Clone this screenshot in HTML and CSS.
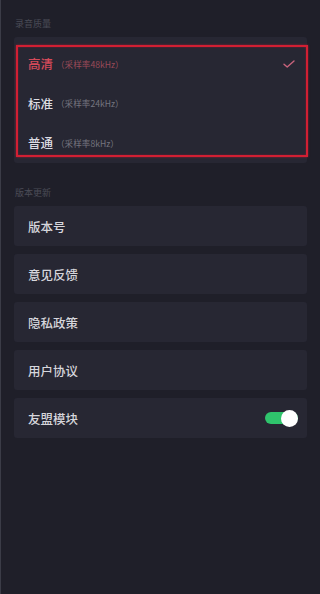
FILE: index.html
```html
<!DOCTYPE html>
<html lang="zh-CN">
<head>
<meta charset="utf-8">
<title>设置</title>
<link rel="stylesheet" href="styles.css">
</head>
<body>
<div class="page">
  <div class="label first">录音质量</div>
  <div class="card quality">
    <div class="qrow selected">
      <span class="qname">高清</span><span class="qsub">（采样率48kHz）</span>
      <svg class="check" width="12" height="8" viewBox="0 0 12 8"><path d="M1 4.2 L4.2 7 L11 1" fill="none" stroke="#c9637c" stroke-width="1.4" stroke-linecap="round" stroke-linejoin="round"/></svg>
    </div>
    <div class="qrow">
      <span class="qname">标准</span><span class="qsub">（采样率24kHz）</span>
    </div>
    <div class="qrow">
      <span class="qname">普通</span><span class="qsub">（采样率8kHz）</span>
    </div>
    <div class="highlight"></div>
  </div>

  <div class="label second">版本更新</div>
  <div class="list">
    <div class="card item">版本号</div>
    <div class="card item">意见反馈</div>
    <div class="card item">隐私政策</div>
    <div class="card item">用户协议</div>
    <div class="card item">友盟模块<span class="toggle"><span class="knob"></span></span></div>
  </div>
</div>
</body>
</html>
```
FILE: styles.css
```css
html, body {
  margin: 0;
  padding: 0;
  background: #1f1f29;
  font-family: "Noto Sans CJK SC", "Noto Sans", sans-serif;
}
.page {
  width: 320px;
  height: 594px;
  box-sizing: border-box;
  border-left: 1px solid #3b3c47;
  padding: 0 13px 0 13px;
  background: #1f1f29;
}
.label {
  font-size: 9px;
  line-height: 12px;
  color: #4b4c57;
  padding-left: 1px;
}
.label.first { padding-top: 18px; margin-bottom: 7px; }
.label.second { margin-top: 24px; margin-bottom: 7px; }
.card {
  background: #272733;
  border-radius: 3px;
}
.quality {
  position: relative;
  padding: 7px 0 0.5px;
}
.qrow {
  height: 39.5px;
  display: flex;
  align-items: center;
  padding: 0 12px 0 14px;
}
.qname {
  font-size: 12.5px;
  font-weight: 500;
  color: #dcdce2;
}
.qsub {
  font-size: 8.6px;
  color: #75757f;
  margin-left: 3px;
}
.selected .qname { color: #d54a5a; }
.selected .qsub { color: #9a4a58; }
.check { margin-left: auto; }
.highlight {
  position: absolute;
  left: 2px;
  top: 8px;
  right: -1px;
  height: 112px;
  box-sizing: border-box;
  border: 2px solid #d21f33;
  box-shadow: 0 0 2px rgba(220, 30, 50, 0.6), inset 0 0 2px rgba(220, 30, 50, 0.5);
  pointer-events: none;
}
.list {
  display: flex;
  flex-direction: column;
  gap: 8px;
}
.item {
  height: 40px;
  display: flex;
  align-items: center;
  padding: 0 9px 0 14px;
  font-size: 12.5px;
  font-weight: 500;
  color: #d6d6dc;
}
.toggle {
  margin-left: auto;
  width: 33px;
  height: 12px;
  border-radius: 6px;
  background: #2fc46c;
  position: relative;
}
.knob {
  position: absolute;
  right: 0;
  top: -2.5px;
  width: 17px;
  height: 17px;
  border-radius: 50%;
  background: #ffffff;
}
```
